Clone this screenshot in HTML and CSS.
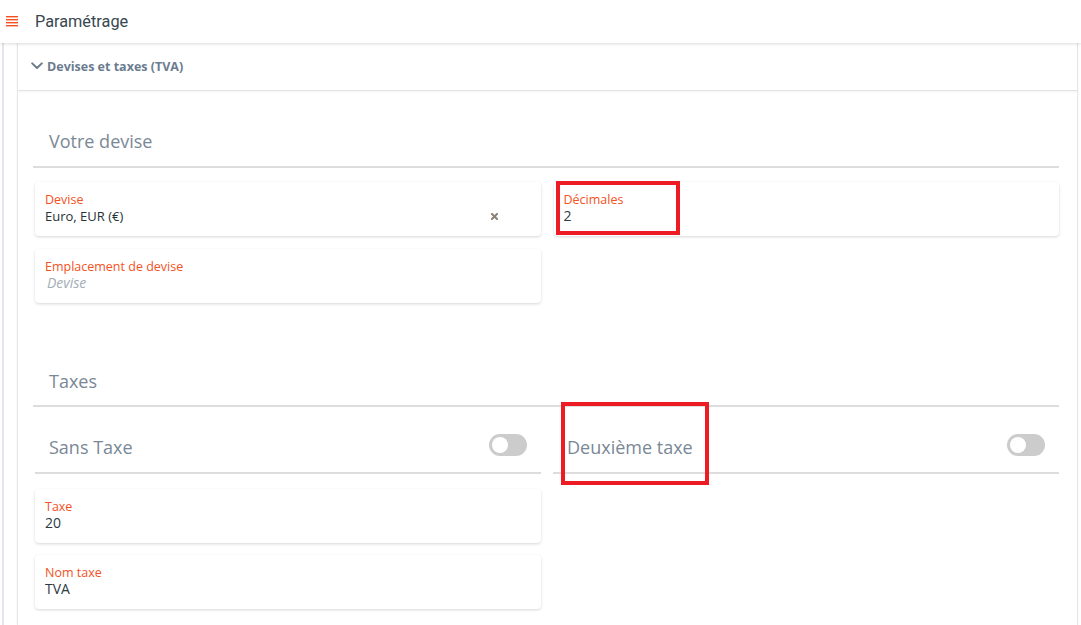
FILE: index.html
```html
<!DOCTYPE html>
<html lang="fr">
<head>
<meta charset="utf-8">
<title>Paramétrage</title>
<link rel="stylesheet" href="styles.css">
</head>
<body>
<header class="topbar">
  <svg class="menu-icon" width="12" height="12" viewBox="0 0 12 12" aria-hidden="true">
    <rect x="0" y="1" width="12" height="1.4" fill="#f4511e"/>
    <rect x="0" y="4" width="12" height="1.4" fill="#f4511e"/>
    <rect x="0" y="7" width="12" height="1.4" fill="#f4511e"/>
    <rect x="0" y="10" width="12" height="1.4" fill="#f4511e"/>
  </svg>
  <h1 class="page-title">Paramétrage</h1>
</header>
<div class="main">
  <section class="panel">
    <div class="panel-head">
      <svg class="chevron" width="12" height="8" viewBox="0 0 12 8" aria-hidden="true">
        <path d="M1.2 1.4 L6 6 L10.8 1.4" fill="none" stroke="#6b7c8f" stroke-width="2" stroke-linecap="round" stroke-linejoin="round"/>
      </svg>
      <span class="panel-title">Devises et taxes (TVA)</span>
    </div>
    <div class="panel-body">
      <h2 class="section-title first">Votre devise</h2>
      <div class="field-grid">
        <div class="field">
          <div class="field-label">Devise</div>
          <div class="field-value row">
            <span>Euro, EUR (€)</span>
            <svg class="clear-icon" width="7" height="7" viewBox="0 0 7 7" aria-hidden="true">
              <path d="M1 1 L6 6 M6 1 L1 6" stroke="#8c8176" stroke-width="2" stroke-linecap="square"/>
            </svg>
          </div>
        </div>
        <div class="field">
          <div class="field-label">Décimales</div>
          <div class="field-value big">2</div>
        </div>
        <div class="field">
          <div class="field-label">Emplacement de devise</div>
          <div class="field-value placeholder">Devise</div>
        </div>
      </div>
      <h2 class="section-title second">Taxes</h2>
      <div class="tax-grid">
        <div class="toggle-head">
          <span>Sans Taxe</span>
          <span class="switch"><span class="knob"></span></span>
        </div>
        <div class="toggle-head">
          <span>Deuxième taxe</span>
          <span class="switch"><span class="knob"></span></span>
        </div>
        <div class="tax-col">
          <div class="field">
            <div class="field-label">Taxe</div>
            <div class="field-value big">20</div>
          </div>
          <div class="field">
            <div class="field-label">Nom taxe</div>
            <div class="field-value big">TVA</div>
          </div>
        </div>
        <div class="tax-col"></div>
      </div>
    </div>
  </section>
</div>
<div class="annot annot-decimales"></div>
<div class="annot annot-deuxieme"></div>
</body>
</html>
```

FILE: styles.css
```css
html, body {
  margin: 0;
  padding: 0;
  overflow: hidden;
  background: #ffffff;
}
body {
  font-family: "Open Sans", "Liberation Sans", sans-serif;
  position: relative;
  height: 625px;
  display: flex;
  flex-direction: column;
}

.topbar {
  height: 43px;
  flex: none;
  display: flex;
  align-items: center;
  background: #fff;
  box-shadow: 0 1px 3px rgba(0, 0, 0, 0.14);
  position: relative;
  z-index: 2;
}
.menu-icon {
  margin-left: 6px;
  margin-top: -1px;
}
.page-title {
  margin: 0 0 0 17px;
  font-family: Roboto, "Liberation Sans", sans-serif;
  font-weight: 400;
  font-size: 16.3px;
  color: #37474f;
}

.main {
  flex: 1;
  min-height: 0;
  margin-left: 2px;
  border-left: 2px solid #e4e4ea;
  display: flex;
}
.panel {
  flex: 1;
  margin: 0 3px 0 13px;
  border: 1px solid #e6e6e6;
  border-top: none;
  border-bottom: none;
  overflow: hidden;
  box-shadow: 0 0 2px rgba(0, 0, 0, 0.06);
}
.panel-head {
  height: 47px;
  display: flex;
  align-items: center;
  border-bottom: 1px solid #e3e3e3;
  box-shadow: 0 1px 2px rgba(0, 0, 0, 0.05);
  padding-left: 13px;
}
.chevron {
  margin-right: 4px;
  margin-top: -1px;
}
.panel-title {
  font-weight: 700;
  font-size: 12.5px;
  color: #6b7c8f;
}

.panel-body {
  padding: 0 18px 0 15px;
}
.section-title {
  margin: 0;
  font-weight: 400;
  font-size: 18px;
  line-height: 24px;
  color: #7a8896;
  padding: 0 16px 13px;
  border-bottom: 2px solid #dddddd;
}
.section-title.first {
  padding-top: 38px;
}
.section-title.second {
  padding-top: 66px;
  padding-bottom: 12px;
}

.field-grid {
  margin-top: 14px;
  padding-left: 2px;
  display: grid;
  grid-template-columns: 1fr 1fr;
  column-gap: 13px;
  row-gap: 13px;
}
.field {
  background: #fff;
  border-radius: 4px;
  box-shadow: 0 1px 3px rgba(0, 0, 0, 0.16);
  padding: 9px 10px 11px;
}
.field-label {
  font-size: 12.5px;
  line-height: 16px;
  color: #f4511e;
  margin-top: 1px;
  margin-bottom: -1px;
}
.field-value {
  font-size: 13px;
  line-height: 18px;
  color: #263238;
}
.field-value.big {
  font-size: 14px;
  color: #2c3a42;
}
.field-value.row {
  display: flex;
  align-items: center;
  justify-content: space-between;
}
.clear-icon {
  margin-right: 33px;
}
.field-value.placeholder {
  font-style: italic;
  font-size: 14px;
  color: #a3adb6;
  padding-left: 2px;
}

.tax-grid {
  padding-left: 2px;
  display: grid;
  grid-template-columns: 1fr 1fr;
  column-gap: 12px;
}
.toggle-head {
  display: flex;
  align-items: center;
  justify-content: space-between;
  padding: 28px 14px 13px;
  border-bottom: 2px solid #dddddd;
  font-size: 18px;
  line-height: 24px;
  color: #7a8896;
}
.switch {
  width: 38px;
  height: 22px;
  border-radius: 11px;
  background: #cccccc;
  position: relative;
  margin-top: -4px;
}
.knob {
  position: absolute;
  left: 3px;
  top: 3px;
  width: 16px;
  height: 16px;
  border-radius: 50%;
  background: #fff;
}
.tax-col {
  display: flex;
  flex-direction: column;
  gap: 12px;
  padding-top: 15px;
}

.annot {
  position: absolute;
  border: 4px solid #ed1c24;
  box-sizing: border-box;
  z-index: 5;
}
.annot-decimales {
  left: 556px;
  top: 181px;
  width: 124px;
  height: 54px;
}
.annot-deuxieme {
  left: 561px;
  top: 402px;
  width: 148px;
  height: 83px;
}
```
